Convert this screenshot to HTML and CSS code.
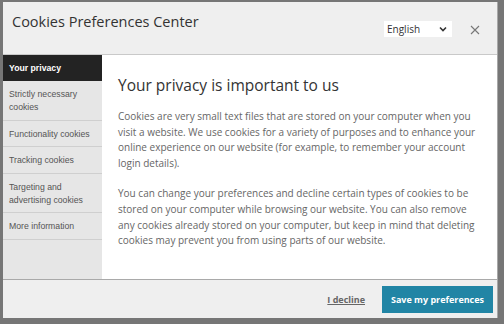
FILE: index.html
```html
<!DOCTYPE html>
<html lang="en">
<head>
    <meta charset="UTF-8">
    <meta name="viewport" content="width=device-width, initial-scale=1.0">
    <title>Cookies Preferences Center</title>
    <link rel="stylesheet" href="styles.css">
</head>
<body>
    <div class="modal">
        <div class="modal-header">
            <h1>Cookies Preferences Center</h1>
            <div class="lang">
                <span>English</span>
                <svg width="8" height="6" viewBox="0 0 8 6"><path d="M1 1.5 L4 4.5 L7 1.5" fill="none" stroke="#333" stroke-width="1.6"/></svg>
            </div>
            <button class="close" aria-label="Close">
                <svg width="10" height="10" viewBox="0 0 10 10"><path d="M1 1 L9 9 M9 1 L1 9" stroke="#777" stroke-width="1.1"/></svg>
            </button>
        </div>

        <div class="modal-body">
            <ul class="tabs">
                <li class="active">Your privacy</li>
                <li>Strictly necessary cookies</li>
                <li>Functionality cookies</li>
                <li>Tracking cookies</li>
                <li>Targeting and advertising cookies</li>
                <li>More information</li>
            </ul>
            <div class="content">
                <h2>Your privacy is important to us</h2>
                <p>Cookies are very small text files that are stored on your computer when you visit a website. We use cookies for a variety of purposes and to enhance your online experience on our website (for example, to remember your account login details).</p>
                <p>You can change your preferences and decline certain types of cookies to be stored on your computer while browsing our website. You can also remove any cookies already stored on your computer, but keep in mind that deleting cookies may prevent you from using parts of our website.</p>
            </div>
        </div>

        <div class="modal-footer">
            <a href="#" class="decline">I decline</a>
            <button class="save">Save my preferences</button>
        </div>
    </div>
</body>
</html>
```

FILE: styles.css
```css
body {
    margin: 0;
    padding: 2px 6px 5px 3px;
    background: #767676;
    font-family: "Open Sans", sans-serif;
}
.modal {
    height: 316px;
    display: flex;
    flex-direction: column;
    background: #efefef;
    border-right: 1px solid #a8a8a8;
}
.modal-header {
    height: 52px;
    display: flex;
    align-items: flex-start;
    padding: 0 0 0 9px;
    border-bottom: 1px solid #c9c9c9;
}
.modal-header h1 {
    margin: 10px 0 0;
    font-size: 14.5px;
    font-weight: 400;
    color: #333;
    flex: 1;
}
.lang {
    margin-top: 19px;
    width: 68px;
    height: 16px;
    background: white;
    display: flex;
    align-items: center;
    justify-content: space-between;
    padding: 0 5px 0 3px;
    box-sizing: border-box;
    font-size: 10px;
    color: #333;
}
.close {
    margin: 21px 15px 0 16px;
    padding: 0;
    border: none;
    background: none;
    width: 14px;
    height: 14px;
    display: flex;
    align-items: center;
    justify-content: center;
}
.modal-body {
    flex: 1;
    display: flex;
    background: white;
}
.tabs {
    list-style: none;
    margin: 0;
    padding: 0;
    width: 99px;
    background: #e6e6e6;
    font-family: "Liberation Sans", Arial, sans-serif;
    font-size: 8.7px;
    color: #555;
}
.tabs li {
    padding: 7px 4px 5.5px 6px;
    line-height: 13px;
    border-bottom: 1px solid #cfcfcf;
}
.tabs li.active {
    background: #232323;
    color: white;
    font-weight: bold;
    padding-bottom: 6px;
    border-bottom: none;
}
.content {
    flex: 1;
    padding: 19px 16px 0 16px;
}
.content h2 {
    margin: 0 0 13px;
    font-size: 15.5px;
    font-weight: 500;
    color: #333;
}
.content p {
    margin: 0 0 15px;
    font-size: 10px;
    line-height: 15.6px;
    color: #666;
}
.modal-footer {
    height: 38px;
    border-top: 1px solid #a9a9a9;
    display: flex;
    align-items: center;
    justify-content: flex-end;
    padding-right: 4px;
}
.decline {
    font-size: 9px;
    font-weight: 700;
    color: #666;
    margin-right: 17px;
}
.save {
    width: 111px;
    height: 27px;
    border: none;
    background: #2185a5;
    color: white;
    font-family: "Open Sans", sans-serif;
    font-size: 9px;
    font-weight: 700;
}
```
